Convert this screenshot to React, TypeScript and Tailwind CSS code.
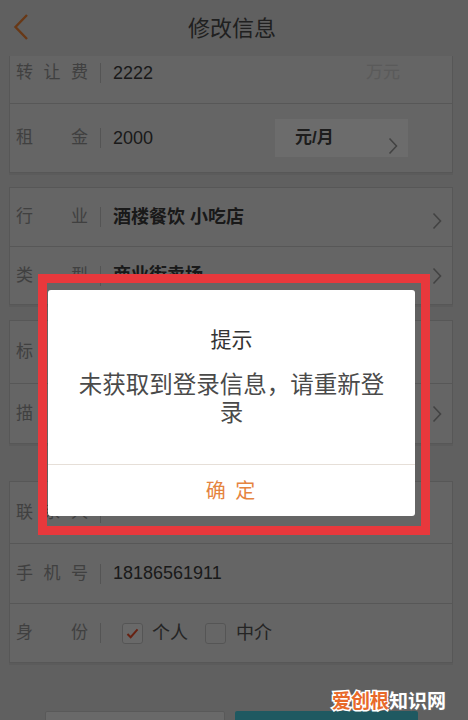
import React from "react";

function Chevron({ className = "" }: { className?: string }) {
  return (
    <svg viewBox="0 0 10 18" className={`h-[18px] w-[10px] ${className}`} fill="none">
      <polyline points="1.5,1.5 8.5,9 1.5,16.5" stroke="#9a9a9a" strokeWidth="1.6" />
    </svg>
  );
}

function Label({ text }: { text: string }) {
  return (
    <div className="flex w-[72px] justify-between text-[17px] text-[#959595]">
      {text.split("").map((c, i) => (
        <span key={i}>{c}</span>
      ))}
    </div>
  );
}

function Row({
  label,
  height,
  last,
  children,
}: {
  label: string;
  height: string;
  last?: boolean;
  children?: React.ReactNode;
}) {
  return (
    <div className={`flex items-center pl-[6px] pr-[10px] ${height} ${last ? "" : "border-b border-[#c9c9c9]"}`}>
      <Label text={label} />
      <div className="mx-[12px] h-[20px] w-px bg-[#c4c4c4]" />
      <div className="flex flex-1 items-center">{children}</div>
    </div>
  );
}

function Card({ className = "", children }: { className?: string; children: React.ReactNode }) {
  return (
    <div className={`ml-[9px] mr-[15px] border border-[#c9c9c9] bg-[#e9e9e9] shadow-[0_2px_0_#d2d2d2] ${className}`}>
      {children}
    </div>
  );
}

export default function App() {
  return (
    <div className="relative h-[720px] w-[468px] overflow-hidden bg-[#dedede] font-['Liberation_Sans','Noto_Sans_CJK_SC',sans-serif]">
      <header className="relative flex h-[56px] items-center justify-center bg-[#dedede]">
        <svg viewBox="0 0 16 28" className="absolute left-[13px] top-[13px] h-[28px] w-[16px]" fill="none">
          <polyline points="14,2 2.5,14 14,26" stroke="#f08233" strokeWidth="2.4" />
        </svg>
        <h1 className="-ml-[4px] text-[22px] text-[#4a4a4a]">修改信息</h1>
      </header>

      <main className="overflow-hidden">
        <Card className="-mt-[14px]">
          <Row label="转让费" height="h-[61px]">
            <span className="text-[18px] text-[#3e3e3e]">2222</span>
            <span className="ml-auto mr-[42px] text-[17px] text-[#d0d0d0]">万元</span>
          </Row>
          <Row label="租金" height="h-[68px]" last>
            <span className="text-[18px] text-[#3e3e3e]">2000</span>
            <div className="relative ml-auto mr-[34px] flex h-[38px] w-[133px] items-center bg-[#fbfbfb] pl-[20px]">
              <span className="text-[17px] font-bold text-[#444]">元/月</span>
              <Chevron className="absolute bottom-[2px] right-[10px]" />
            </div>
          </Row>
        </Card>

        <Card className="mt-[14px]">
          <Row label="行业" height="h-[59px]">
            <span className="text-[18px] font-bold text-[#3a3a3a]">酒楼餐饮 小吃店</span>
            <Chevron className="ml-auto mt-[8px]" />
          </Row>
          <Row label="类型" height="h-[57px]" last>
            <span className="text-[18px] font-bold text-[#3a3a3a]">商业街卖场</span>
            <Chevron className="ml-auto" />
          </Row>
        </Card>

        <Card className="mt-[15px]">
          <Row label="标题" height="h-[63px]" />
          <Row label="描述" height="h-[59px]" last>
            <Chevron className="ml-auto" />
          </Row>
        </Card>

        <Card className="mt-[37px]">
          <Row label="联系人" height="h-[62px]" />
          <Row label="手机号" height="h-[60px]">
            <span className="text-[18px] text-[#3e3e3e]">18186561911</span>
          </Row>
          <Row label="身份" height="h-[58px]" last>
            <div className="ml-[9px] flex items-center">
              <span className="flex h-[21px] w-[21px] items-center justify-center rounded-[3px] border border-[#c6c6c6] bg-[#f4f4f4]">
                <svg viewBox="0 0 14 12" className="h-[11px] w-[13px]" fill="none">
                  <polyline points="1.5,6.5 5,10 12.5,1.5" stroke="#ef4f2a" strokeWidth="2.2" />
                </svg>
              </span>
              <span className="ml-[9px] text-[18px] text-[#555]">个人</span>
              <span className="ml-[17px] h-[21px] w-[21px] rounded-[3px] border border-[#c6c6c6] bg-[#ececec]" />
              <span className="ml-[10px] text-[18px] text-[#555]">中介</span>
            </div>
          </Row>
        </Card>

        <div className="mt-[48px] flex gap-[10px] pl-[45px]">
          <div className="h-[44px] w-[180px] rounded-[2px] border border-[#cfcfcf] bg-[#f4f4f4]" />
          <div className="h-[44px] w-[183px] rounded-[2px] bg-[#48cfe0]" />
        </div>
      </main>

      <div className="absolute inset-0 bg-black/[0.57]" />

      <div className="absolute left-[48px] top-[290px] w-[367px] rounded-[3px] bg-white">
        <div className="px-[20px] pb-[37px] pt-[36px] text-center">
          <p className="text-[21px] leading-[28px] text-[#333]">提示</p>
          <p className="mt-[17px] text-[23.5px] leading-[28px] text-[#4a4a4a]">
            未获取到登录信息，请重新登
            <br />录
          </p>
        </div>
        <div className="flex h-[52px] items-center justify-center border-t border-[#e6dfd8] text-[20px] tracking-[2px] text-[#e5843f]">
          确 定
        </div>
      </div>

      <div className="absolute left-[38px] top-[274px] h-[261px] w-[392px] border-[9px] border-[#e8383c]" />

      <div className="absolute left-[332px] top-[690px] flex text-[19px] font-bold leading-[24px] [paint-order:stroke_fill]">
        <span className="text-[#e8692a] [-webkit-text-stroke:3px_white]">爱创根</span>
        <span className="text-white [-webkit-text-stroke:2px_#666]">知识网</span>
      </div>
    </div>
  );
}
